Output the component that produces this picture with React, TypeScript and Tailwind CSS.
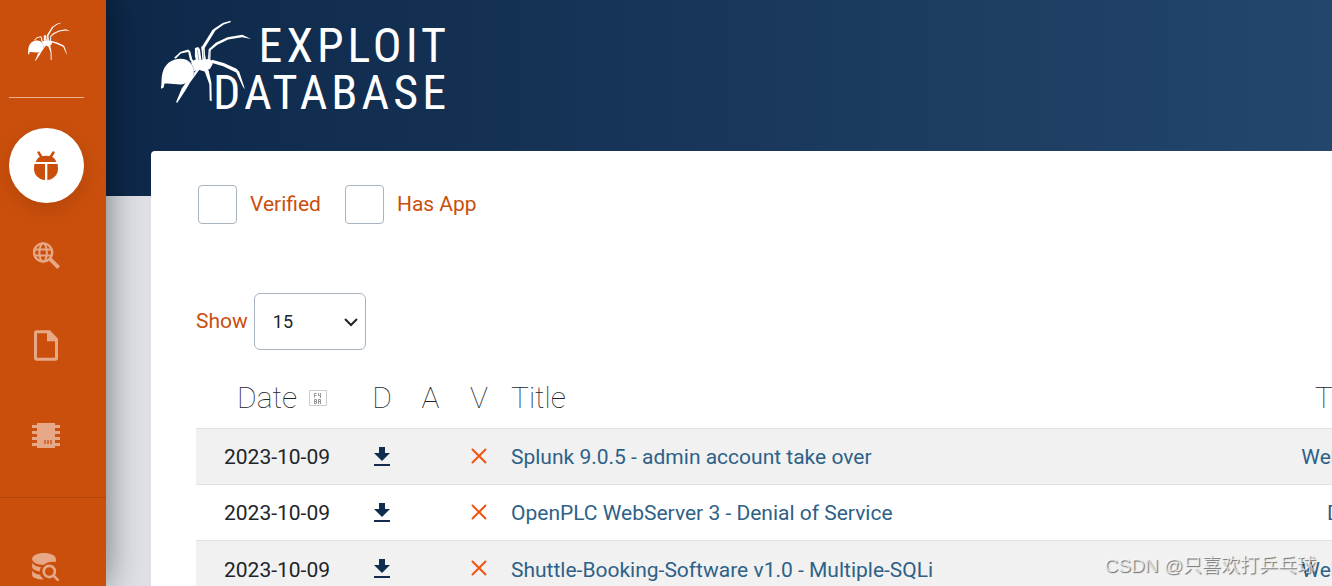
import type { ReactNode } from "react";

const exploits = [
  { date: "2023-10-09", title: "Splunk 9.0.5 - admin account take over", type: "WebApps" },
  { date: "2023-10-09", title: "OpenPLC WebServer 3 - Denial of Service", type: "DoS" },
  { date: "2023-10-09", title: "Shuttle-Booking-Software v1.0 - Multiple-SQLi", type: "WebApps" },
];

function Spider({ className }: { className: string }) {
  return (
    <svg viewBox="18 16 268 248" className={className} fill="#fff" aria-hidden="true">
      <path d="M17 220C21 208 18 190 22 174C28 146 50 130 76 130C104 130 118 152 116 172C113 190 98 205 78 207C62 208 42 202 28 205L26 216Z" />
      <path d="M108 140L124 130L142 134L160 131L171 136L172 146L164 160L148 168L130 163L114 168Z" />
      <path d="M139 96L171 45L176 41L203 23L226 17L225 22L205 28L180 46L148 98L150 134H142Z" />
      <path d="M160 102L181 83L216 66L260 59L287 72L260 66L218 73L186 89L166 105L165 136L157 134Z" />
      <path d="M170 133L205 143L243 160L251 169L268 221L262 214L242 171L203 153L168 142Z" />
      <path d="M149 158L160 165L168 202L169 257L163 255L162 206L147 165Z" />
      <path d="M136 158L104 202L91 224L66 262L63 259L80 218L97 195L127 160Z" />
      <path d="M57 127L75 110L99 103L105 108L111 132L124 146L114 146L104 133L99 110L77 115L62 130Z" />
      <path d="M119 98L129 95L134 103L139 139L127 145L119 124Z" />
      <path d="M138 93L146 98L152 136L142 136Z" />
      <path d="M96 135C112 146 120 160 114 182" fill="none" stroke="#a9afd0" strokeWidth="2" />
      <path d="M126 104L131 135M145 104V130M161 108V132" fill="none" stroke="#8291b3" strokeWidth="2" />
    </svg>
  );
}

function BugIcon() {
  return (
    <svg viewBox="0 0 72 90" className="h-[30px] w-6" fill="#ca4f0c" aria-hidden="true">
      <path d="M5 33C8 25 13 20 21 16Q36 12 51 16C59 20 64 25 67 33Z" />
      <path d="M14 5L24 21M58 5L48 21" stroke="#ca4f0c" strokeWidth="8" strokeLinecap="round" />
      <path d="M1 39H33V87C14 86 0 71 0 54ZM40 39H71L72 54C72 71 58 86 40 87Z" />
    </svg>
  );
}

function WebSearchIcon() {
  return (
    <svg viewBox="0 0 80 80" className="size-[27px]" fill="none" stroke="currentColor" strokeWidth="6" aria-hidden="true">
      <circle cx="30" cy="31" r="27" strokeWidth="7" />
      <ellipse cx="30" cy="31" rx="11" ry="27" />
      <path d="M4 22H56M4 40H56" />
      <path d="M50 50L76 76" strokeWidth="11" />
    </svg>
  );
}

function FileIcon() {
  return (
    <svg viewBox="0 0 72 93" className="h-[31px] w-6" fill="currentColor" aria-hidden="true">
      <path fillRule="evenodd" d="M8 1H48L72 26V84Q72 92 64 92H8Q0 92 0 84V9Q0 1 8 1ZM9 10V83H63V34H39V10Z" />
    </svg>
  );
}

function PapersIcon() {
  return (
    <svg viewBox="0 0 84 75" className="h-[25px] w-7" fill="currentColor" aria-hidden="true">
      <path d="M15 0H69V6H84V15H69V24H84V33H69V42H84V51H69V60H84V69H69V75H15V69H0V60H15V51H0V42H15V33H0V24H15V15H0V6H15Z" />
      <path d="M39 51V63M48 51V63M57 51V63" stroke="#ca4f0c" strokeWidth="4" />
    </svg>
  );
}

function DatabaseSearchIcon() {
  return (
    <svg viewBox="0 0 84 88" className="h-[29px] w-7" fill="currentColor" aria-hidden="true">
      <path d="M36 0C56 0 72 8 72 18V27Q61 25 50 28Q42 30 36 36C16 36 0 28 0 18C0 8 16 0 36 0Z" />
      <path d="M0 30C5 37 15 42 27 43Q23 49 23 56C11 55 0 49 0 42ZM0 54C5 61 14 65 24 66Q27 74 35 80C17 82 0 75 0 67Z" />
      <circle cx="52" cy="56" r="17" fill="none" stroke="currentColor" strokeWidth="8" />
      <path d="M64 68L80 84" stroke="currentColor" strokeWidth="8" />
    </svg>
  );
}

function NavLink({ label, children }: { label: string; children: ReactNode }) {
  return (
    <a href="#" aria-label={label} className="flex size-[75px] items-center justify-center pr-px text-[#e7a887]">
      {children}
    </a>
  );
}

function Sidebar() {
  return (
    <aside className="relative z-10 flex w-[106px] shrink-0 flex-col bg-[#ca4f0c] shadow-[0_0_36px_rgba(0,0,0,0.5)]">
      <div className="px-[9px]">
        <a href="#" aria-label="Exploit Database home" className="flex h-[98px] w-[75px] items-start justify-center border-b border-[#eeb492] pt-[22px] pl-1">
          <Spider className="h-10 w-[42px]" />
        </a>
      </div>
      <nav className="flex flex-col gap-[15px] px-[9px] pt-[30px]">
        <a href="#" aria-label="Exploits" className="flex size-[75px] items-center justify-center rounded-full bg-white pr-px shadow-[0_6px_20px_rgba(0,0,0,0.12)]">
          <BugIcon />
        </a>
        <NavLink label="Google hacking database"><WebSearchIcon /></NavLink>
        <NavLink label="Papers"><FileIcon /></NavLink>
        <NavLink label="Shellcodes"><PapersIcon /></NavLink>
      </nav>
      <nav className="mt-6 border-t border-[#b5440b] px-[9px] pt-8">
        <NavLink label="Search database"><DatabaseSearchIcon /></NavLink>
      </nav>
    </aside>
  );
}

function Logo() {
  return (
    <a href="#" className="flex items-start pt-5 pl-[55px] text-white">
      <Spider className="h-[84px] w-[90px] shrink-0" />
      <span className="-ml-9 flex w-[231px] flex-col items-end pt-0.5 font-['Roboto_Condensed','Liberation_Sans_Narrow',sans-serif] text-5xl leading-[47px] tracking-[4px]">
        <span className="-mr-1">EXPLOIT</span>
        <span className="-mr-1">DATABASE</span>
      </span>
    </a>
  );
}

function Filters() {
  return (
    <div className="flex items-center text-[21px] text-[#ca4f0c]">
      <label className="flex items-center gap-[13px] pl-0.5">
        <input type="checkbox" className="size-[39px] appearance-none rounded border border-[#a9b3bd] bg-white" />
        Verified
      </label>
      <label className="ml-6 flex items-center gap-[13px]">
        <input type="checkbox" className="size-[39px] appearance-none rounded border border-[#a9b3bd] bg-white" />
        Has App
      </label>
    </div>
  );
}

function PageSize() {
  return (
    <div className="mt-[69px] flex items-center gap-1.5 text-[21px] text-[#ca4f0c]">
      <label htmlFor="page-size">Show</label>
      <span className="relative">
        <select id="page-size" defaultValue="15" className="block h-[57px] w-28 appearance-none rounded-md border border-[#a9b3bd] bg-white pl-[18px] text-lg text-[#212529]">
          <option>15</option>
          <option>30</option>
          <option>60</option>
          <option>120</option>
        </select>
        <svg viewBox="0 0 14 10" className="pointer-events-none absolute top-6 right-2 h-2.5 w-3.5" fill="none" stroke="#212529" strokeWidth="2" aria-hidden="true">
          <path d="M1 2L7 8L13 2" />
        </svg>
      </span>
    </div>
  );
}

// Private use glyph box, shown where the sort icon font is missing
function SortGlyph() {
  return (
    <svg viewBox="0 0 18 16" className="h-4 w-[18px]" fill="none" aria-hidden="true">
      <path d="M.5.5H17.5V15.5H.5Z" stroke="#ccc" />
      <path d="M7.5 3.5H5.5V7.5M5.5 5.5H7.5M9.5 3V5.5H11.5M11.5 3V8M5.5 9.5V13.5H7.5V9.5H5.5M5.5 11.5H7.5M9.5 14V9.5H11.5V14M9.5 11.5H11.5" stroke="#999" />
    </svg>
  );
}

function DownloadIcon() {
  return (
    <svg viewBox="0 0 16 19" className="mx-auto h-[19px] w-4" fill="#112d4e" aria-hidden="true">
      <path d="M5 0H11V6H16L8 14L0 6H5ZM0 17H16V19H0Z" />
    </svg>
  );
}

function CrossIcon() {
  return (
    <svg viewBox="0 0 16 16" className="mx-auto size-4" fill="none" stroke="#f0540c" strokeWidth="2" role="img" aria-label="Not verified">
      <path d="M1 1L15 15M15 1L1 15" />
    </svg>
  );
}

function ExploitTable() {
  return (
    <table className="mt-3 w-[calc(100%+68px)] table-fixed border-collapse text-[21px] text-[#212529]">
      <thead className="text-[30px]">
        <tr className="h-[66px] [&>th]:pt-1.5 [&>th]:font-thin">
          <th className="w-[162px] pl-[41px] text-left">
            <span className="flex items-center gap-3">Date <SortGlyph /></span>
          </th>
          <th className="w-12">D</th>
          <th className="w-[49px]">A</th>
          <th className="w-12">V</th>
          <th className="pl-2 text-left">Title</th>
          <th className="w-[108px]">Type</th>
        </tr>
      </thead>
      <tbody>
        {exploits.map((item) => (
          <tr key={item.title} className="h-14 border-t border-[#dee2e6] odd:bg-[#f1f1f1]">
            <td className="pt-1 text-center">{item.date}</td>
            <td>
              <a href="#" aria-label={`Download ${item.title}`}><DownloadIcon /></a>
            </td>
            <td />
            <td><CrossIcon /></td>
            <td className="pt-1 pl-2 text-[#2e6187]"><a href="#">{item.title}</a></td>
            <td className="pt-1 text-center text-[#2e6187]"><a href="#">{item.type}</a></td>
          </tr>
        ))}
      </tbody>
    </table>
  );
}

export default function App() {
  return (
    <div className="relative flex h-screen overflow-hidden bg-[#dfe1e6] font-['Roboto',sans-serif]">
      <Sidebar />
      <div className="flex min-w-0 flex-1 flex-col">
        <header className="h-[196px] shrink-0 bg-linear-to-r from-[#0d2849] to-[#24466d]">
          <Logo />
        </header>
        <main className="relative z-20 -mt-[45px] ml-[45px] flex-1 overflow-hidden rounded-tl bg-white pt-[34px] pl-[45px]">
          <Filters />
          <PageSize />
          <ExploitTable />
        </main>
      </div>
      <p className="pointer-events-none absolute right-4 bottom-1.5 z-30 font-['Liberation_Sans','Noto_Sans_CJK_SC',sans-serif] text-[19px] text-white/70 [text-shadow:1px_1px_1px_rgba(0,0,0,0.55)]">
        CSDN @只喜欢打乒乓球
      </p>
    </div>
  );
}
